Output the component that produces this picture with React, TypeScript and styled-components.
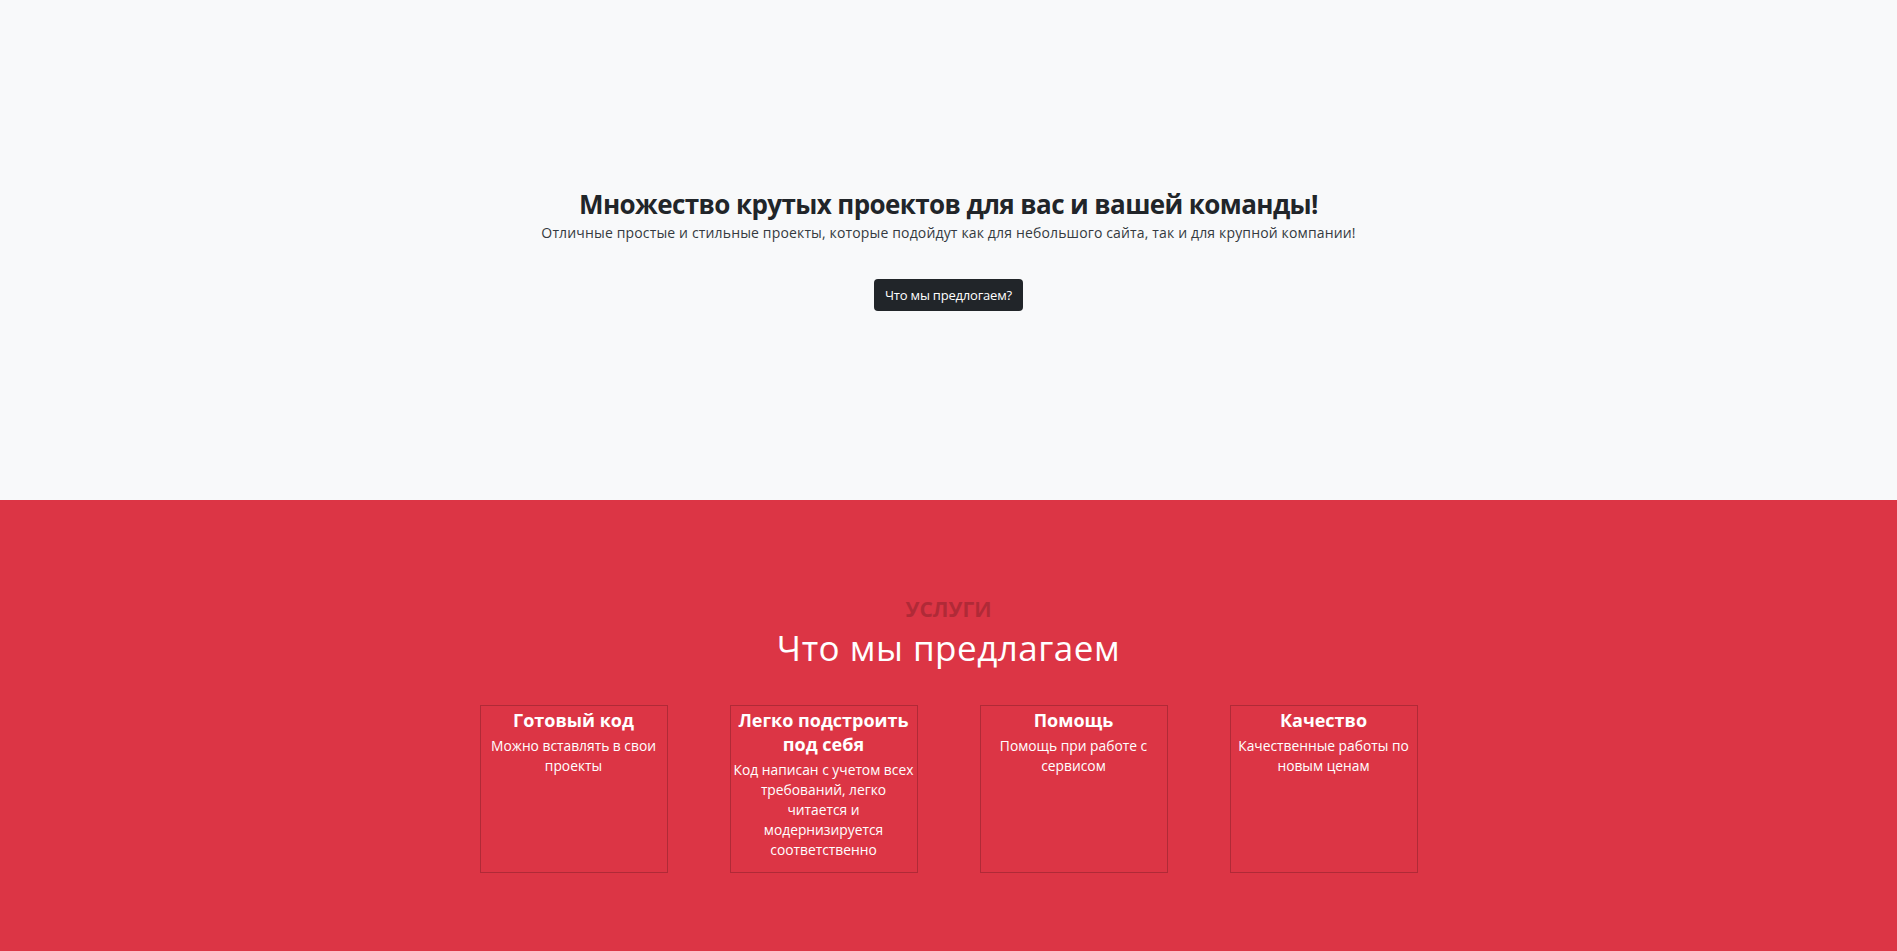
import styled, { createGlobalStyle } from 'styled-components';

const GlobalStyle = createGlobalStyle`
  body {
    margin: 0;
    font-family: 'Open Sans', 'Liberation Sans', sans-serif;
    background: #dc3545;
  }
`;

const services = [
  { title: 'Готовый код', text: 'Можно вставлять в свои проекты' },
  {
    title: 'Легко подстроить под себя',
    text: 'Код написан с учетом всех требований, легко читается и модернизируется соответственно',
  },
  { title: 'Помощь', text: 'Помощь при работе с сервисом' },
  { title: 'Качество', text: 'Качественные работы по новым ценам' },
];

export default function App() {
  return (
    <>
      <GlobalStyle />
      <Hero_section>
        <Hero_title>Множество крутых проектов для вас и вашей команды!</Hero_title>
        <Hero_text>
          Отличные простые и стильные проекты, которые подойдут как для небольшого сайта, так и для
          крупной компании!
        </Hero_text>
        <Dark_button>Что мы предлогаем?</Dark_button>
      </Hero_section>
      <Services_section>
        <Label_span>услуги</Label_span>
        <Services_title>Что мы предлагаем</Services_title>
        <Cards_div>
          {services.map((s) => (
            <Card_div key={s.title}>
              <Card_title>{s.title}</Card_title>
              <Card_text>{s.text}</Card_text>
            </Card_div>
          ))}
        </Cards_div>
      </Services_section>
    </>
  );
}

const Hero_section = styled.section`
  height: 500px;
  background: #f8f9fa;
  display: flex;
  flex-direction: column;
  align-items: center;
  justify-content: center;
  text-align: center;
`;
const Hero_title = styled.h1`
  margin: 0;
  font-size: 26px;
  font-weight: 700;
  line-height: 1.2;
  letter-spacing: -0.6px;
  color: #212529;
`;
const Hero_text = styled.p`
  margin: 2px 0 0;
  font-size: 14px;
  line-height: 1.5;
  color: #343a40;
  letter-spacing: 0.15px;
`;
const Dark_button = styled.button`
  margin-top: 36px;
  padding: 0 10px;
  height: 32px;
  width: 149px;
  border: none;
  border-radius: 4px;
  background: #212529;
  color: #fff;
  font-family: 'Open Sans', 'Liberation Sans', sans-serif;
  font-size: 13px;
  letter-spacing: -0.2px;
  cursor: pointer;
`;
const Services_section = styled.section`
  background: #dc3545;
  padding: 97px 0 77px;
  display: flex;
  flex-direction: column;
  align-items: center;
  text-align: center;
`;
const Label_span = styled.span`
  font-size: 21px;
  font-weight: 700;
  line-height: 25px;
  text-transform: uppercase;
  color: #b02a37;
`;
const Services_title = styled.h2`
  margin: 4px 0 0;
  font-size: 35px;
  font-weight: 400;
  line-height: 44px;
  letter-spacing: 0.5px;
  color: #fff;
`;
const Cards_div = styled.div`
  display: flex;
  gap: 62px;
  margin-top: 35px;
`;
const Card_div = styled.div`
  width: 188px;
  height: 168px;
  box-sizing: border-box;
  border: 1px solid #b02a37;
  padding: 2px 0 0;
  color: #fff;
`;
const Card_title = styled.h5`
  margin: 0 0 4px;
  font-size: 18px;
  font-weight: 700;
  line-height: 24px;
`;
const Card_text = styled.p`
  margin: 0;
  font-size: 13.8px;
  line-height: 20px;
  letter-spacing: 0;
`;
